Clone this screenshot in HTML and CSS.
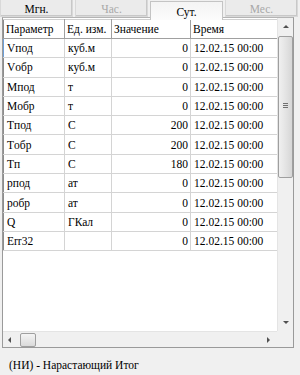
FILE: index.html
```html
<!DOCTYPE html>
<html lang="ru">
<head>
    <meta charset="UTF-8">
    <title>Параметры</title>
    <link rel="stylesheet" href="styles.css">
</head>
<body>
    <div class="tabs">
        <div class="tab">Мгн.</div>
        <div class="tab disabled">Час.</div>
        <div class="tab active">Сут.</div>
        <div class="tab disabled">Мес.</div>
    </div>

    <div class="panel">
        <div class="grid">
            <table>
                <colgroup>
                    <col style="width: 61px">
                    <col style="width: 47px">
                    <col style="width: 79px">
                    <col style="width: 87px">
                </colgroup>
                <thead>
                    <tr>
                        <th>Параметр</th>
                        <th>Ед. изм.</th>
                        <th>Значение</th>
                        <th>Время</th>
                    </tr>
                </thead>
                <tbody>
                    <tr class="current"><td>Vпод</td><td>куб.м</td><td class="num">0</td><td>12.02.15 00:00</td></tr>
                    <tr><td>Vобр</td><td>куб.м</td><td class="num">0</td><td>12.02.15 00:00</td></tr>
                    <tr><td>Mпод</td><td>т</td><td class="num">0</td><td>12.02.15 00:00</td></tr>
                    <tr><td>Mобр</td><td>т</td><td class="num">0</td><td>12.02.15 00:00</td></tr>
                    <tr><td>Tпод</td><td>C</td><td class="num">200</td><td>12.02.15 00:00</td></tr>
                    <tr><td>Tобр</td><td>C</td><td class="num">200</td><td>12.02.15 00:00</td></tr>
                    <tr><td>Tп</td><td>C</td><td class="num">180</td><td>12.02.15 00:00</td></tr>
                    <tr><td>pпод</td><td>ат</td><td class="num">0</td><td>12.02.15 00:00</td></tr>
                    <tr><td>pобр</td><td>ат</td><td class="num">0</td><td>12.02.15 00:00</td></tr>
                    <tr><td>Q</td><td>ГКал</td><td class="num">0</td><td>12.02.15 00:00</td></tr>
                    <tr><td>Err32</td><td></td><td class="num">0</td><td>12.02.15 00:00</td></tr>
                </tbody>
            </table>
        </div>

        <div class="vscroll">
            <span class="arrow up"></span>
            <div class="vthumb"><span class="grip"></span></div>
            <span class="arrow down"></span>
        </div>

        <div class="hscroll">
            <span class="arrow left"></span>
            <div class="hthumb"></div>
            <span class="arrow right"></span>
        </div>

        <div class="corner"></div>
    </div>

    <p class="note">(НИ) - Нарастающий Итог</p>
</body>
</html>
```

FILE: styles.css
```css
body {
    margin: 0;
    width: 300px;
    height: 375px;
    background-color: #f0f0f0;
    font-family: "Liberation Serif", "DejaVu Serif", serif;
    font-size: 11.5px;
    color: #000;
}

/* tab strip */
.tabs {
    display: flex;
    gap: 2px;
    height: 17px;
    position: relative;
    z-index: 1;
}

.tab {
    width: 71px;
    height: 16px;
    line-height: 19px;
    text-align: center;
    background-color: #ebebeb;
    border: 1px solid #d9d9d9;
    border-top: none;
    box-shadow: inset -1px -1px 0 #c8c8c8;
}

.tab.disabled {
    color: #a8a8a8;
}

.tab.active {
    height: 18px;
    margin-top: 1px;
    line-height: 21px;
    background: linear-gradient(#f4f4f4, #fcfcfc);
    border: 1px solid #c4c4c4;
    border-bottom: none;
    box-shadow: none;
}

/* grid panel */
.panel {
    margin-left: 2px;
    width: 290px;
    height: 329px;
    border: 1px solid #9a9a9a;
    border-top-color: #b4b4b4;
    background-color: #fff;
    display: grid;
    grid-template-columns: 274px 16px;
    grid-template-rows: 1fr 16px;
}

.grid {
    overflow: hidden;
    padding-top: 1px;
}

table {
    border-collapse: collapse;
    table-layout: fixed;
    width: 274px;
    font-size: 11.5px;
}

th {
    height: 18px;
    padding: 0 2px;
    text-align: left;
    font-weight: normal;
    white-space: nowrap;
    overflow: hidden;
    border: 1px solid #a0a0a0;
    border-top-color: #d0d0d0;
    border-left: none;
}

td {
    height: 18.3px;
    padding: 0 3px;
    white-space: nowrap;
    overflow: hidden;
    border-right: 1px solid #d4d4d4;
    border-bottom: 1px solid #d4d4d4;
}

th:first-child,
td:first-child {
    border-left: 1px solid #8c8c8c;
}

tr.current td:first-child {
    border-left-color: #6d9fd8;
}

td.num {
    text-align: right;
    padding-right: 2px;
}

/* scrollbars */
.vscroll,
.hscroll,
.corner {
    background-color: #f0f0f0;
    position: relative;
}

.vscroll {
    border-left: 1px solid #e4e4e4;
}

.vthumb {
    position: absolute;
    left: 0;
    top: 18px;
    width: 13px;
    height: 140px;
    border: 1px solid #9f9f9f;
    border-radius: 2px;
    background: linear-gradient(to right, #f0f0f0, #e4e4e4 50%, #d6d6d6);
}

.grip {
    position: absolute;
    left: 4px;
    top: 66px;
    width: 5px;
    height: 5px;
    background: repeating-linear-gradient(#707070 0 1px, transparent 1px 2px);
}

.hthumb {
    position: absolute;
    left: 17px;
    top: 1px;
    width: 14px;
    height: 12px;
    border: 1px solid #9f9f9f;
    border-radius: 2px;
    background: linear-gradient(#f4f4f4, #dadada);
}

.arrow {
    position: absolute;
    width: 0;
    height: 0;
    border: 3px solid transparent;
}

.arrow.up {
    left: 5px;
    top: 7px;
    border-bottom: 3px solid #505050;
    border-top-width: 0;
}

.arrow.down {
    left: 5px;
    bottom: 7px;
    border-top: 3px solid #505050;
    border-bottom-width: 0;
}

.arrow.left {
    left: 5px;
    top: 5px;
    border-right: 3px solid #505050;
    border-left-width: 0;
}

.arrow.right {
    right: 7px;
    top: 5px;
    border-left: 3px solid #505050;
    border-right-width: 0;
}

.hscroll {
    border-top: 1px solid #e4e4e4;
}

.note {
    margin: 11px 0 0 9px;
}
```
